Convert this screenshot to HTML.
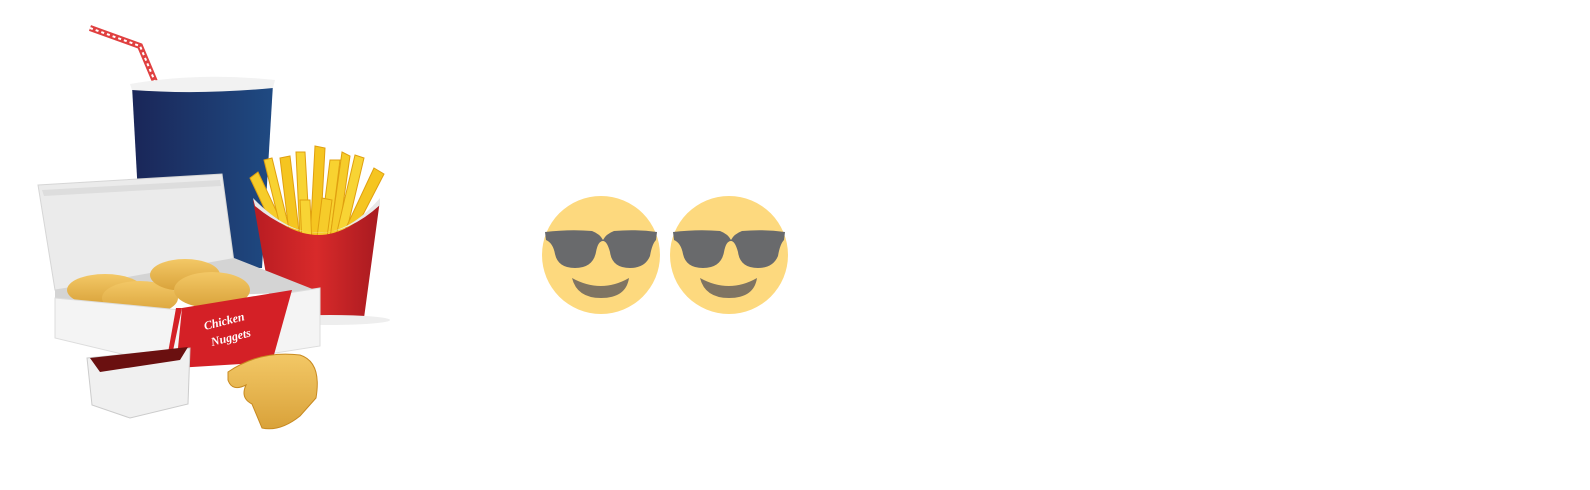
<!DOCTYPE html>
<html><head><meta charset="utf-8"><style>
html,body{margin:0;padding:0;background:#fff;width:1590px;height:490px;overflow:hidden}
svg{position:absolute;left:0;top:0}
</style></head><body>
<svg width="1590" height="490" viewBox="0 0 1590 490" xmlns="http://www.w3.org/2000/svg">
<defs>
<linearGradient id="cup" x1="0" x2="1"><stop offset="0" stop-color="#1a2658"/><stop offset="1" stop-color="#1f4a82"/></linearGradient>
<linearGradient id="red" x1="0" x2="1"><stop offset="0" stop-color="#b81c22"/><stop offset=".5" stop-color="#d82a2a"/><stop offset="1" stop-color="#a81a20"/></linearGradient>
<linearGradient id="nug" x1="0" y1="0" x2="0" y2="1"><stop offset="0" stop-color="#f3c866"/><stop offset="1" stop-color="#d9a23a"/></linearGradient>
</defs>
<polyline points="90,28 140,46 156,84" fill="none" stroke="#e04040" stroke-width="6"/>
<polyline points="90,28 140,46 156,84" fill="none" stroke="#fff" stroke-width="2" stroke-dasharray="3 3"/>
<path d="M132,86 L273,84 L262,268 L142,268 Z" fill="url(#cup)"/>
<path d="M130,84 Q200,72 275,80 L273,88 Q200,95 132,90 Z" fill="#f2f2f2"/>
<g stroke="#e0a010" stroke-width="1">
<path d="M250,178 L258,172 L290,240 L282,246Z" fill="#f6cc2a"/>
<path d="M264,160 L272,158 L292,240 L284,242Z" fill="#f8d230"/>
<path d="M280,158 L290,156 L300,240 L290,240Z" fill="#f5c520"/>
<path d="M296,152 L305,152 L310,240 L300,240Z" fill="#f8d434"/>
<path d="M315,146 L325,148 L320,240 L310,240Z" fill="#f5c520"/>
<path d="M330,160 L340,160 L330,240 L320,240Z" fill="#f8d230"/>
<path d="M342,152 L350,156 L338,240 L330,238Z" fill="#f6cc2a"/>
<path d="M355,155 L364,158 L345,238 L336,236Z" fill="#f8d434"/>
<path d="M374,168 L384,174 L352,236 L344,232Z" fill="#f5c520"/>
<path d="M300,200 L310,200 L312,245 L302,245Z" fill="#f8d434"/>
<path d="M322,198 L332,200 L326,245 L316,245Z" fill="#f6cc2a"/>
</g>
<path d="M253,200 Q320,270 380,200 L364,318 L273,314 Z" fill="url(#red)"/>
<path d="M253,198 Q320,268 380,198 L380,205 Q320,260 255,206Z" fill="#e8e8e8"/>
<ellipse cx="330" cy="320" rx="60" ry="5" fill="#eee"/>
<path d="M38,185 L222,174 L234,262 L55,290 Z" fill="#ebebeb" stroke="#d6d6d6"/>
<path d="M42,190 L220,180 L221,186 L44,196Z" fill="#ddd"/>
<path d="M55,290 L234,258 L320,292 L55,300Z" fill="#d4d4d4"/>
<ellipse cx="105" cy="290" rx="38" ry="16" fill="url(#nug)"/>
<ellipse cx="140" cy="298" rx="38" ry="17" fill="url(#nug)"/>
<ellipse cx="185" cy="275" rx="35" ry="16" fill="url(#nug)"/>
<ellipse cx="212" cy="290" rx="38" ry="18" fill="url(#nug)"/>
<path d="M55,298 L180,310 L320,288 L320,346 L180,368 L55,338 Z" fill="#f4f4f4" stroke="#ddd"/>
<path d="M182,308 L292,290 L272,362 L176,368 Z" fill="#d42026"/>
<path d="M176,308 L182,308 L170,365 L166,364Z" fill="#d42026"/>
<text transform="translate(205,330) rotate(-14)" font-family="Liberation Serif, serif" font-style="italic" font-weight="bold" font-size="12" fill="#fff">Chicken</text>
<text transform="translate(212,346) rotate(-14)" font-family="Liberation Serif, serif" font-style="italic" font-weight="bold" font-size="12" fill="#fff">Nuggets</text>
<path d="M87,358 L190,348 L188,404 L130,418 L92,405 Z" fill="#f0f0f0" stroke="#ccc"/>
<path d="M90,358 L188,347 L180,360 L100,372Z" fill="#6a1010"/>
<path d="M228,372 Q260,350 300,355 Q322,362 316,398 L300,416 Q280,432 262,428 L252,404 Q240,398 246,385 Q232,392 228,380Z" fill="url(#nug)" stroke="#c88a20"/>
<g id="e1">
<circle cx="601" cy="255" r="59" fill="#fdd97e"/>
<path d="M545,232 Q570,229 592,231 Q600,234 603,240 Q606,234 614,231 Q636,229 657,232 L656,240 Q652,244 650,256 Q645,268 630,268 Q612,268 610,252 Q607,241 603,241 Q598,241 596,252 Q593,268 575,268 Q558,268 555,254 Q553,243 546,240Z" fill="#696a6c"/>
<path d="M572,278 Q601,294 629,278 Q626,298 601,298 Q577,298 572,278Z" fill="#7f7462"/>
</g>
<use href="#e1" x="128"/>
</svg>
</body></html>
